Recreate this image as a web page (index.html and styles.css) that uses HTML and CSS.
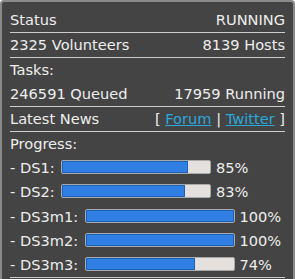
FILE: index.html
```html
<!DOCTYPE html>
<html lang="en">
<head>
    <meta charset="UTF-8">
    <title>Project Status</title>
    <link rel="stylesheet" href="styles.css">
</head>
<body>
    <div class="panel">
        <div class="row line">
            <span>Status</span>
            <span>RUNNING</span>
        </div>
        <div class="row line">
            <span>2325 Volunteers</span>
            <span>8139 Hosts</span>
        </div>
        <div class="row">
            <span>Tasks:</span>
        </div>
        <div class="row line">
            <span>246591 Queued</span>
            <span>17959 Running</span>
        </div>
        <div class="row line">
            <span>Latest News</span>
            <span>[ <a href="#">Forum</a> | <a href="#">Twitter</a> ]</span>
        </div>
        <div class="row">
            <span>Progress:</span>
        </div>
        <div class="prog">- DS1: <span class="bar"><span class="fill" style="width: 85%"></span></span> 85%</div>
        <div class="prog">- DS2: <span class="bar"><span class="fill" style="width: 83%"></span></span> 83%</div>
        <div class="prog">- DS3m1: <span class="bar"><span class="fill" style="width: 100%"></span></span> 100%</div>
        <div class="prog">- DS3m2: <span class="bar"><span class="fill" style="width: 100%"></span></span> 100%</div>
        <div class="prog line">- DS3m3: <span class="bar"><span class="fill" style="width: 74%"></span></span> 74%</div>
    </div>
</body>
</html>
```

FILE: styles.css
```css
body {
    margin: 0;
    background-color: #ffffff;
    font-family: "DejaVu Sans", sans-serif;
    font-size: 14.6px;
}
.panel {
    background-color: #444444;
    color: #eeeeee;
    border: 2px solid #8a8a8a;
    border-bottom: none;
    border-radius: 4px 4px 0 0;
    padding: 6px 8px 20px 8px;
}
.row {
    display: flex;
    justify-content: space-between;
    height: 24px;
    line-height: 24px;
}
.line {
    border-bottom: 1px solid #cccccc;
}
.row a {
    color: #29a8dd;
}
.prog {
    height: 24.3px;
    line-height: 24px;
    white-space: nowrap;
}
.bar {
    display: inline-block;
    width: 148px;
    height: 12px;
    margin-left: 2px;
    vertical-align: -1px;
    background-color: #e3e0dd;
    border: 1px solid #a9a9a9;
    border-radius: 2px;
    overflow: hidden;
}
.fill {
    display: block;
    height: 100%;
    background-color: #2f80e2;
    box-shadow: inset 0 0 0 1px #1d60bb;
}
```
